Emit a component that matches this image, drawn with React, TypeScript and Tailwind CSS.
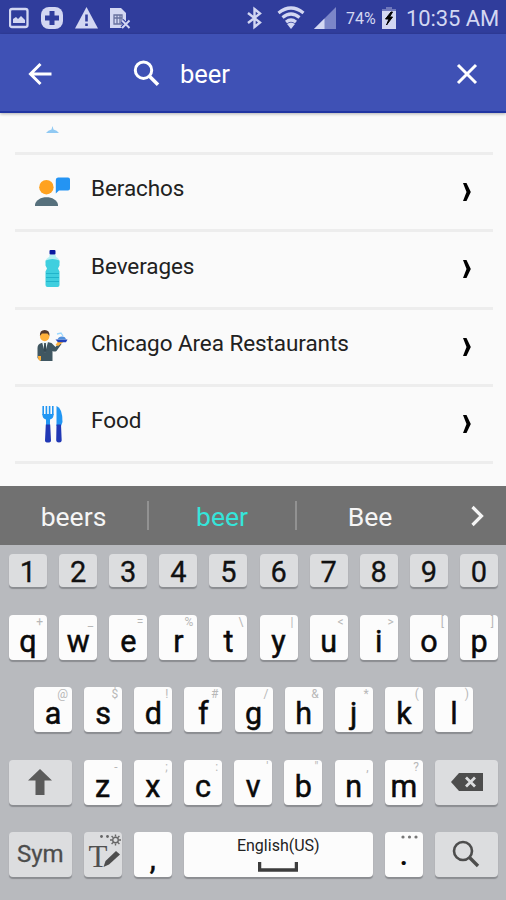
import type { ReactNode } from "react";
import clsx from "clsx";

type KeyDef = { label: string; hint?: string };

const numbers = ["1", "2", "3", "4", "5", "6", "7", "8", "9", "0"];

const topRow: KeyDef[] = [
  { label: "q", hint: "+" },
  { label: "w", hint: "_" },
  { label: "e", hint: "=" },
  { label: "r", hint: "%" },
  { label: "t", hint: "\\" },
  { label: "y", hint: "|" },
  { label: "u", hint: "<" },
  { label: "i", hint: ">" },
  { label: "o", hint: "[" },
  { label: "p", hint: "]" },
];

const homeRow: KeyDef[] = [
  { label: "a", hint: "@" },
  { label: "s", hint: "$" },
  { label: "d", hint: "!" },
  { label: "f", hint: "#" },
  { label: "g", hint: "/" },
  { label: "h", hint: "&" },
  { label: "j", hint: "*" },
  { label: "k", hint: "(" },
  { label: "l", hint: ")" },
];

const bottomRow: KeyDef[] = [
  { label: "z", hint: "-" },
  { label: "x", hint: ";" },
  { label: "c", hint: ":" },
  { label: "v", hint: "'" },
  { label: "b", hint: "\"" },
  { label: "n", hint: "," },
  { label: "m", hint: "?" },
];

function PersonIcon() {
  return (
    <svg width="36" height="38" viewBox="0 0 36 38">
      <circle cx="11.4" cy="14.2" r="7.2" fill="#ffa21f" />
      <path d="M0 33v-1.500C1 27 6 24.300 11.500 24.300S22 27 23 31.500V33z" fill="#56707c" />
      <path d="M23 4.500h10a2 2 0 0 1 2 2v9a2 2 0 0 1-2 2h-9l-3.200 3V7a2.500 2.500 0 0 1 2.200-2.500z" fill="#2494f3" />
    </svg>
  );
}

function BottleIcon() {
  return (
    <svg width="36" height="38" viewBox="0 0 36 38">
      <path d="M14.500 4.500h6L21 7c3 1.500 3.500 3 3.500 6H10.600c0-3 .4-4.500 3.600-6z" fill="#b5f0f3" />
      <rect x="14.500" y="0" width="6" height="4.500" rx="1" fill="#0a1aa0" />
      <path d="M10.600 10.500Q17.500 7.500 24.500 10.500v5l-1.500 3 1.500 3V35q0 2-2 2h-10q-2 0-2-2V21.500l1.500-3-1.500-3z" fill="#3fcfdf" />
      <path d="M11 23.500h13M11 27.500h13M11 31.500h13" stroke="#20b4cb" strokeWidth="1" />
    </svg>
  );
}

function WaiterIcon() {
  return (
    <svg width="36" height="38" viewBox="0 0 36 38">
      <path d="M2.500 20q0-4 4-5l6-1 4 1 4 4 4-5 2 2-5 7q-2 1-4 0v10h-12l-3-3z" fill="#3f5661" />
      <path d="M7 14l3 11 3-11z" fill="#e9f4f5" />
      <path d="M9.200 15h1.600l.5 8-1.300 2-1.300-2z" fill="#354852" />
      <circle cx="9.700" cy="8.500" r="4.700" fill="#ffb13b" />
      <path d="M4.900 8q-.4-6 4.800-6t4.800 6l-2-2.500H7z" fill="#54392c" />
      <path d="M3 28h3v4.500H4.500Q3 32 3 28zM20.500 17l2.500-3.500h6l-6 4.500z" fill="#ffb13b" />
      <path d="M20.500 11.500h12l-1.500 2.700h-8z" fill="#2040b8" />
      <path d="M22.500 11.500q1-3 4.500-3t4 3z" fill="#4f8fdd" />
      <path d="M22 6l4-1 2 3" fill="none" stroke="#9bd8ff" strokeWidth="1.300" />
    </svg>
  );
}

function CutleryIcon() {
  return (
    <svg width="36" height="38" viewBox="0 0 36 38">
      <path d="M8.200 1v9M11.400 1v9M14.600 1v9M17.800 1v9" stroke="#2196f3" strokeWidth="1.600" />
      <path d="M7.400 9h11.200q.2 4.500-3.600 5.500v8h-4v-8q-3.800-1-3.600-5.500z" fill="#2196f3" />
      <path d="M21.500 1q6 2 6 16l-1.500 4h-4.500z" fill="#2196f3" />
      <path d="M10.800 19.500h4.400l.8 16q0 2-3 2t-3-2zM21.500 19.500H26l.7 16q0 2-2.700 2t-2.800-2z" fill="#2138b5" />
    </svg>
  );
}

const categories: { name: string; icon: ReactNode }[] = [
  { name: "Berachos", icon: <PersonIcon /> },
  { name: "Beverages", icon: <BottleIcon /> },
  { name: "Chicago Area Restaurants", icon: <WaiterIcon /> },
  { name: "Food", icon: <CutleryIcon /> },
];

function StatusBar() {
  return (
    <div className="flex h-[34px] items-center bg-[#303d9c] pt-[2px] pr-[7px] pl-[9px] text-[#d3d7f2]">
      <svg width="20" height="22" viewBox="0 0 20 22">
        <rect x="1" y="2" width="17.500" height="18" rx="2" fill="none" stroke="currentColor" strokeWidth="2.300" />
        <path d="M4 16v-4l3-2 2 2 3-3 4 4v3z" fill="currentColor" />
      </svg>
      <svg className="ml-[12px]" width="23" height="24" viewBox="0 0 23 24">
        <rect x="0" y="1" width="22" height="22" rx="8" fill="currentColor" />
        <path d="M8.500 5h5v4.500H18v5h-4.500V19h-5v-4.500H4v-5h4.500z" fill="#303d9c" />
      </svg>
      <svg className="ml-[11px]" width="23" height="22" viewBox="0 0 23 22">
        <path d="M11.500 0L23 21.500H0z" fill="currentColor" />
        <path d="M11.500 7.500v7M11.500 16.500v2.500" stroke="#303d9c" strokeWidth="2.600" />
      </svg>
      <svg className="ml-[11px]" width="22" height="24" viewBox="0 0 22 24">
        <path d="M1 2h11l5 5v9l-3 6H1z" fill="currentColor" />
        <path d="M5 9h8v9H5zM5 12h8M8 9v9M11 9v9" fill="none" stroke="#69729f" strokeWidth="1.300" />
        <path d="M13 14.500l7.500 7.500M20.500 14.500L13 22" stroke="#303d9c" strokeWidth="4" />
        <path d="M13 14.500l7.500 7.500M20.500 14.500L13 22" stroke="currentColor" strokeWidth="2" />
      </svg>
      <svg className="ml-auto" width="17" height="24" viewBox="0 0 17 24">
        <path d="M2 7l12 9.500L8.500 21V3l5.500 4.500L2 17" fill="none" stroke="currentColor" strokeWidth="2.400" />
      </svg>
      <svg className="ml-[14px]" width="28" height="24" viewBox="0 0 28 24">
        <path d="M1.500 7Q14-3 26.500 7M5.500 11.500q8.500-7 17 0M9 16q5-4 10 0" fill="none" stroke="currentColor" strokeWidth="3.200" />
        <path d="M14 23l-4-5q4-3 8 0z" fill="currentColor" />
      </svg>
      <svg className="ml-[9px]" width="23" height="22" viewBox="0 0 23 22">
        <path d="M22 0v22H0z" fill="#7c86c8" />
        <path d="M10.500 11.500V22H0z" fill="currentColor" />
      </svg>
      <span className="mt-[1px] ml-[9px] w-[31px] text-[16px] leading-none">74%</span>
      <svg className="ml-[5px]" width="14" height="24" viewBox="0 0 14 24">
        <path d="M4 1h6v2h4v6H0V3h4z" fill="#7078bb" />
        <rect y="5" width="14" height="18" fill="currentColor" />
        <path d="M9 6L3.500 13H7l-2.500 6 6-8H7.500L10.500 6z" fill="#000" stroke="#000" />
      </svg>
      <span className="mt-[2px] ml-[10px] w-[93px] text-[22px] leading-none tracking-[-0.100px] whitespace-nowrap">10:35 AM</span>
    </div>
  );
}

function SearchBar() {
  return (
    <header className="relative z-10 flex h-[79px] items-center border-b-2 border-[#2135a2] bg-[#3f51b5] pt-[2px] pr-[28px] pl-[28px] text-white shadow-[0_1px_3px_rgba(0,0,0,0.3)]">
      <svg width="24" height="24" viewBox="0 0 24 24" fill="none" stroke="currentColor" strokeWidth="3">
        <path d="M23.500 12H3.500M12.500 2L2.500 12l10 10" />
      </svg>
      <svg className="ml-[81px]" width="28" height="28" viewBox="0 0 28 28" fill="none" stroke="currentColor">
        <circle cx="10.500" cy="10.200" r="8.200" strokeWidth="3" />
        <path d="M16.500 16.200l8.500 8.500" strokeWidth="3.600" />
      </svg>
      <span className="mt-[2px] ml-[19px] text-[25.500px] leading-none">beer</span>
      <svg className="ml-auto" width="22" height="22" viewBox="0 0 22 22" stroke="currentColor" strokeWidth="3">
        <path d="M2 2l18 18M20 2L2 20" />
      </svg>
    </header>
  );
}

function CategoryList() {
  return (
    <main className="flex h-[373px] flex-col overflow-hidden bg-[#fafafa] pr-[13px] pl-[15px]">
      <div className="h-[42px] shrink-0 border-b-[3px] border-[#ededed] pt-[13px] pl-[30px]">
        <svg width="16" height="8" viewBox="0 0 16 8">
          <path d="M1 7q2-3 5.500-3.500L7.500 0l1 3.500Q12 4 14 7z" fill="#90c9f3" />
        </svg>
      </div>
      {categories.map((category) => (
        <div
          key={category.name}
          className="flex h-[77.300px] shrink-0 items-center border-b-[3px] border-[#ededed] pl-[20px]"
        >
          {category.icon}
          <span className="mb-[7px] ml-[20px] text-[22.500px] leading-none tracking-[-0.080px] text-[#212121]">
            {category.name}
          </span>
          <svg className="mr-[21px] ml-auto" width="10" height="18" viewBox="0 0 10 18">
            <path d="M1 0h3.500l4.300 9-4.300 9H1l3.500-9z" fill="#000" />
          </svg>
        </div>
      ))}
    </main>
  );
}

function Suggestions() {
  return (
    <div className="flex h-[59px] items-center bg-[#717171] text-[26.500px] leading-none text-[#f5f5f5]">
      <span className="mt-[3px] w-[147px] text-center">beers</span>
      <span className="h-[29px] w-[2px] bg-[#929292]" />
      <span className="mt-[3px] w-[146px] text-center text-[#35e5da]">beer</span>
      <span className="h-[29px] w-[2px] bg-[#929292]" />
      <span className="mt-[3px] w-[146px] text-center">Bee</span>
      <svg className="ml-[28px]" width="13" height="22" viewBox="0 0 13 22" fill="none" stroke="currentColor" strokeWidth="3.200">
        <path d="M1.500 2l9 9-9 9" />
      </svg>
    </div>
  );
}

function Key({ className, children }: { className?: string; children?: ReactNode }) {
  return (
    <div
      className={clsx(
        "relative flex shrink-0 justify-center rounded-[4px] shadow-[0_2px_1px_#8b8d91]",
        className
      )}
    >
      {children}
    </div>
  );
}

function LetterKey({ label, hint }: KeyDef) {
  return (
    <Key className="h-[45px] w-[38px] bg-[#fcfcfc]">
      <span className="mt-[12px] h-[30px] text-[30.500px] leading-[30px] text-[#0a0a0a] [-webkit-text-stroke:0.500px_#0a0a0a]">
        {label}
      </span>
      {hint && (
        <span className="absolute top-[1px] right-[4px] text-[12px] leading-[13px] text-[#b8b8b8]">
          {hint}
        </span>
      )}
    </Key>
  );
}

function Keyboard() {
  return (
    <div className="flex h-[355px] flex-col bg-[#b8babe] pt-[9px] pr-[8px] pl-[9px]">
      <div className="flex justify-between">
        {numbers.map((n) => (
          <Key key={n} className="h-[33px] w-[38px] bg-[#dcdddf]">
            <span className="pt-[4px] text-[29px] leading-[29px] text-[#111] [-webkit-text-stroke:0.300px_#111]">{n}</span>
          </Key>
        ))}
      </div>
      <div className="mt-[28px] flex justify-between">
        {topRow.map((k) => (
          <LetterKey key={k.label} {...k} />
        ))}
      </div>
      <div className="mt-[27.300px] flex justify-between pr-[25px] pl-[25px]">
        {homeRow.map((k) => (
          <LetterKey key={k.label} {...k} />
        ))}
      </div>
      <div className="mt-[27.300px] flex justify-between">
        <Key className="h-[45px] w-[62.500px] items-center bg-[#dcdddf]">
          <svg width="24" height="26" viewBox="0 0 24 26">
            <path d="M12 0l12 11.500h-7.500V26h-9V11.500H0z" fill="#5b5b5b" />
          </svg>
        </Key>
        {bottomRow.map((k) => (
          <LetterKey key={k.label} {...k} />
        ))}
        <Key className="h-[45px] w-[63px] items-center bg-[#dcdddf]">
          <svg width="32" height="18" viewBox="0 0 32 18">
            <path d="M8 0h24v18H8L0 9z" fill="#4d4d4d" />
            <path d="M15 4.500l9 9M24 4.500l-9 9" stroke="#dcdddf" strokeWidth="2.800" />
          </svg>
        </Key>
      </div>
      <div className="mt-[27.300px] flex justify-between">
        <Key className="h-[45px] w-[62.500px] items-center bg-[#dcdddf]">
          <span className="text-[24px] leading-none text-[#4d4d4d] [-webkit-text-stroke:0.300px_#4d4d4d]">Sym</span>
        </Key>
        <Key className="h-[45px] w-[38px] bg-[#dcdddf]">
          <span className="absolute top-[9px] left-[5px] font-['Liberation_Serif',serif] text-[31px] leading-[31px] text-[#505050]">
            T
          </span>
          <svg className="relative" width="38" height="45" viewBox="0 0 38 45">
            <path d="M19.500 35l2-6L32 19l4 3.500L25 32.500z" fill="#4d4d4d" />
            <circle cx="17.500" cy="4.500" r="1.400" fill="#666" />
            <circle cx="23.500" cy="4.500" r="1.400" fill="#666" />
            <circle cx="31.500" cy="8" r="2.800" fill="none" stroke="#666" strokeWidth="1.400" />
            <path d="M31.500 2.500v2M31.500 11.500v2M26 8h2M35 8h2M27.600 4.100l1.400 1.400M34 10.500l1.400 1.400M35.400 4.100L34 5.500M29 10.500l-1.400 1.400" stroke="#666" strokeWidth="1.400" />
          </svg>
        </Key>
        <LetterKey label="," />
        <Key className="h-[45px] w-[189px] flex-col items-center justify-start bg-[#fcfcfc]">
          <span className="mt-[5px] text-[16px] leading-[18px] text-[#222]">English(US)</span>
          <svg className="mt-[7px]" width="40" height="10" viewBox="0 0 40 10">
            <path d="M1.500 0v8h37V0" fill="none" stroke="#3d3d3d" strokeWidth="3.500" />
          </svg>
        </Key>
        <Key className="h-[45px] w-[38px] bg-[#fcfcfc]">
          <span className="pt-[7px] text-[31px] leading-[31px] font-medium text-[#0a0a0a]">.</span>
          <svg className="absolute top-[3px] right-[5px]" width="17" height="4" viewBox="0 0 17 4" fill="#777">
            <circle cx="2" cy="2" r="1.600" />
            <circle cx="8.500" cy="2" r="1.600" />
            <circle cx="15" cy="2" r="1.600" />
          </svg>
        </Key>
        <Key className="h-[45px] w-[63px] items-center bg-[#dcdddf]">
          <svg width="28" height="28" viewBox="0 0 28 28" fill="none" stroke="#4d4d4d">
            <circle cx="11" cy="11" r="9" strokeWidth="2.600" />
            <path d="M17 17l9 9" strokeWidth="3.400" />
          </svg>
        </Key>
      </div>
    </div>
  );
}

export default function App() {
  return (
    <div className="flex h-[900px] w-[506px] flex-col overflow-hidden font-[Roboto,sans-serif]">
      <StatusBar />
      <SearchBar />
      <CategoryList />
      <Suggestions />
      <Keyboard />
    </div>
  );
}
